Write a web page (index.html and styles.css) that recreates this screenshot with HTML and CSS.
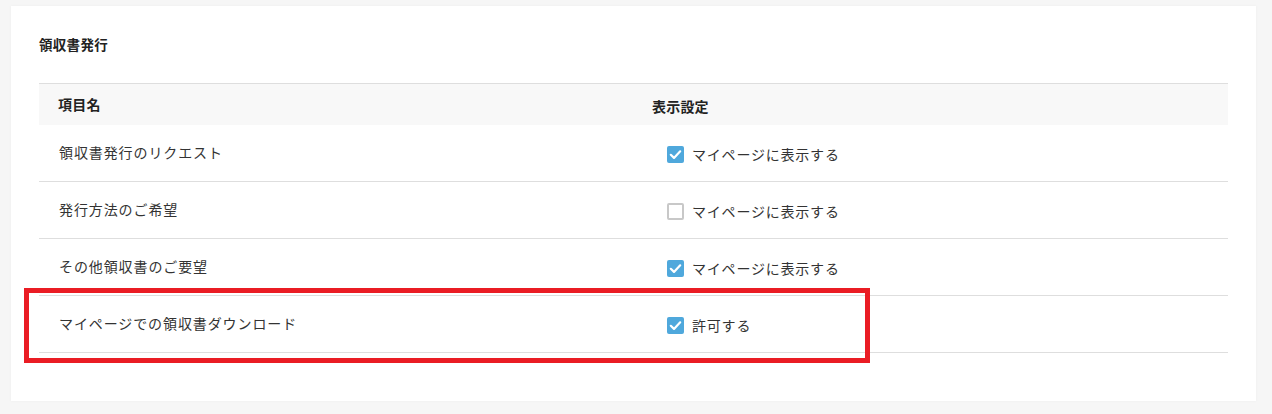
FILE: index.html
```html
<!DOCTYPE html>
<html lang="ja">
<head>
<meta charset="utf-8">
<link rel="stylesheet" href="styles.css">
</head>
<body>
<div class="page">
  <section class="card">
    <h2 class="title">領収書発行</h2>
    <div class="table">
      <div class="row head">
        <div class="cell name">項目名</div>
        <div class="cell setting">表示設定</div>
      </div>
      <div class="row">
        <div class="cell name">領収書発行のリクエスト</div>
        <div class="cell setting"><span class="cb on"><svg viewBox="0 0 17 17"><path d="M3.8 8.8l3.2 3.1 6.2-6.6" /></svg></span>マイページに表示する</div>
      </div>
      <div class="row">
        <div class="cell name">発行方法のご希望</div>
        <div class="cell setting"><span class="cb off"></span>マイページに表示する</div>
      </div>
      <div class="row">
        <div class="cell name">その他領収書のご要望</div>
        <div class="cell setting"><span class="cb on"><svg viewBox="0 0 17 17"><path d="M3.8 8.8l3.2 3.1 6.2-6.6" /></svg></span>マイページに表示する</div>
      </div>
      <div class="row">
        <div class="cell name">マイページでの領収書ダウンロード</div>
        <div class="cell setting"><span class="cb on"><svg viewBox="0 0 17 17"><path d="M3.8 8.8l3.2 3.1 6.2-6.6" /></svg></span>許可する</div>
      </div>
      <div class="highlight"></div>
    </div>
  </section>
</div>
</body>
</html>
```
FILE: styles.css
```css
* { box-sizing: border-box; }
html, body { margin: 0; padding: 0; }
body {
  width: 1272px;
  height: 414px;
  background: #f6f6f6;
  font-family: "Noto Sans CJK JP", "Noto Sans", sans-serif;
  color: #333;
  overflow: hidden;
}
.page {
  padding: 6px 16px 0 11px;
}
.card {
  width: 1245px;
  height: 395px;
  background: #fff;
  padding: 0 28px 0 28px;
  box-shadow: 0 0 3px rgba(0,0,0,0.04);
}
.title {
  margin: 0;
  padding-top: 28px;
  height: 77px;
  font-size: 13.5px;
  font-weight: bold;
  line-height: 20px;
  color: #222;
  letter-spacing: 0.3px;
}
.table {
  position: relative;
  width: 1189px;
  border-top: 1px solid #dedede;
}
.row {
  display: grid;
  grid-template-columns: 594px 1fr;
  height: 57px;
  border-bottom: 1px solid #dedede;
  align-items: center;
}
.row.head {
  height: 41px;
  background: #f8f8f8;
  border-bottom: none;
  font-size: 11.5px;
  font-weight: bold;
  color: #222;
}
.row.head .name { padding-left: 19px; letter-spacing: 0.2px; }
.row.head .setting { padding-left: 19px; letter-spacing: 0.2px; }
.cell {
  display: flex;
  align-items: center;
}
.name {
  padding-left: 20px;
  font-size: 14px;
  letter-spacing: 0.9px;
  padding-bottom: 2px;
}
.setting {
  padding-left: 34px;
  font-size: 14px;
  letter-spacing: 0.8px;
  padding-top: 2px;
}
.cb {
  width: 17px;
  height: 17px;
  border-radius: 2px;
  margin-right: 8px;
  flex: none;
  display: inline-block;
}
.cb.on { background: #4fa8dc; }
.cb.off { border: 2px solid #c8c8c8; background: #fff; }
.cb svg { width: 17px; height: 17px; display: block; }
.cb svg path {
  fill: none;
  stroke: #fff;
  stroke-width: 2.2;
  stroke-linecap: round;
  stroke-linejoin: round;
}
.highlight {
  position: absolute;
  left: -15px;
  top: 204px;
  width: 846px;
  height: 75px;
  border: 5px solid #ea1c24;
  pointer-events: none;
}
```
